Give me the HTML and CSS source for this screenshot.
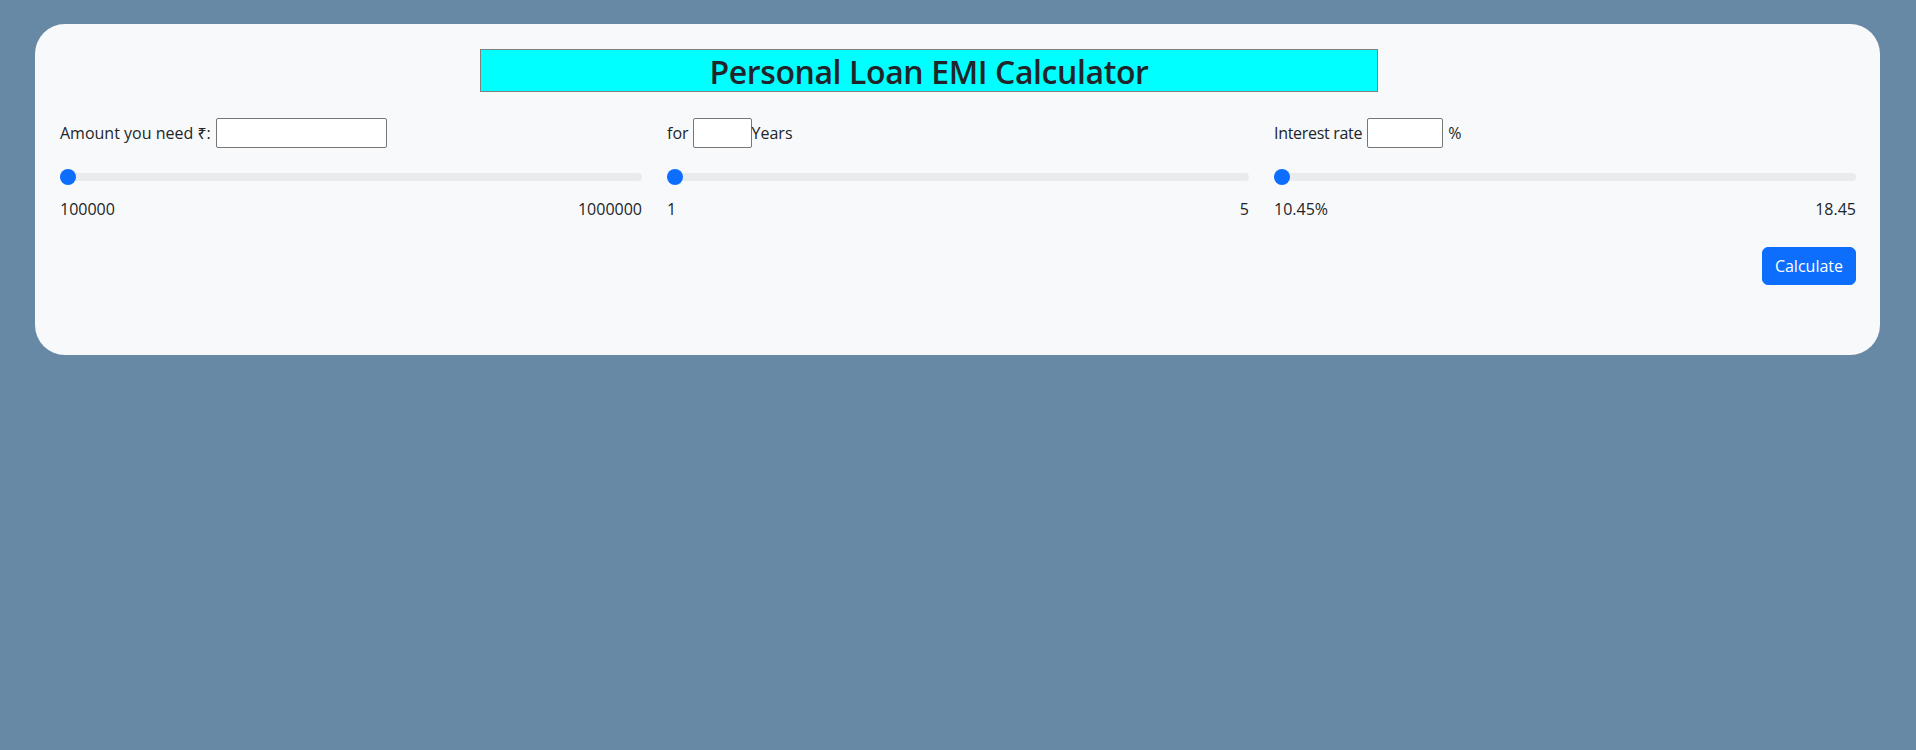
FILE: index.html
```html
<!DOCTYPE html>
<html lang="en">
<head>
<meta charset="utf-8">
<title>Personal Loan EMI Calculator</title>
<link rel="stylesheet" href="styles.css">
</head>
<body>
<div class="card">
  <h2 class="title">Personal Loan EMI Calculator</h2>
  <div class="grid">
    <div class="col">
      <div class="label-row">
        <span>Amount you need ₹:</span>
        <input class="field field-amount" type="text">
      </div>
      <input class="range" type="range" min="100000" max="1000000" value="100000">
      <div class="scale"><span>100000</span><span>1000000</span></div>
    </div>
    <div class="col">
      <div class="label-row">
        <span>for</span>
        <input class="field field-years" type="text">
        <span>Years</span>
      </div>
      <input class="range" type="range" min="1" max="5" value="1">
      <div class="scale"><span>1</span><span>5</span></div>
    </div>
    <div class="col">
      <div class="label-row">
        <span class="tight">Interest rate</span>
        <input class="field field-rate" type="text">
        <span class="pct">%</span>
      </div>
      <input class="range" type="range" min="10.45" max="18.45" step="0.01" value="10.45">
      <div class="scale"><span>10.45%</span><span>18.45</span></div>
      <div class="actions"><button class="btn" type="button">Calculate</button></div>
    </div>
  </div>
</div>
</body>
</html>
```

FILE: styles.css
```css
* { box-sizing: border-box; }

html, body {
  margin: 0;
  padding: 0;
}

body {
  background: #6889a6;
  font-family: "Open Sans", "Noto Sans", "DejaVu Sans", sans-serif;
  font-size: 16px;
  line-height: 24px;
  color: #212529;
  min-height: 750px;
}

.card {
  margin: 24px 36px 0 35px;
  background: #f8f9fa;
  border-radius: 30px;
  padding: 25px 24px 70px 25px;
}

.title {
  margin: 0 0 0 420px;
  width: 50%;
  height: 43px;
  padding-top: 2px;
  border: 1px solid #808080;
  background: #00ffff;
  font-size: 32px;
  font-weight: 600;
  letter-spacing: -0.4px;
  line-height: 39px;
  text-align: center;
  color: #212529;
}

.grid {
  display: grid;
  grid-template-columns: repeat(3, 1fr);
  column-gap: 25px;
  margin-top: 25px;
}

.col {
  display: flex;
  flex-direction: column;
}

.label-row {
  display: flex;
  align-items: center;
  height: 30px;
  margin-top: 1px;
}

.tight { letter-spacing: -0.3px; }

.field {
  height: 30px;
  border: 1px solid #767676;
  border-radius: 2px;
  background: #fff;
  padding: 1px 2px;
  font: inherit;
  margin: 0;
}

.field-amount { width: 171px; margin-left: 5px; }
.field-years { width: 59px; margin-left: 4px; }
.field-rate { width: 76px; margin-left: 5px; }
.pct { margin-left: 5px; }

.range {
  -webkit-appearance: none;
  appearance: none;
  width: 100%;
  height: 24px;
  margin: 17px 0 0 0;
  padding: 0;
  background: transparent;
}

.range::-webkit-slider-runnable-track {
  height: 8px;
  border-radius: 8px;
  background: #e9ecef;
}

.range::-webkit-slider-thumb {
  -webkit-appearance: none;
  appearance: none;
  width: 16px;
  height: 16px;
  margin-top: -4px;
  border: 0;
  border-radius: 50%;
  background: #0d6efd;
}

.scale {
  display: flex;
  justify-content: space-between;
  margin-top: 8px;
}

.actions {
  display: flex;
  justify-content: flex-end;
  margin-top: 26px;
}

.btn {
  font: inherit;
  color: #fff;
  background: #0d6efd;
  border: 1px solid #0d6efd;
  border-radius: 6px;
  padding: 6px 12px;
  line-height: 24px;
}
```
